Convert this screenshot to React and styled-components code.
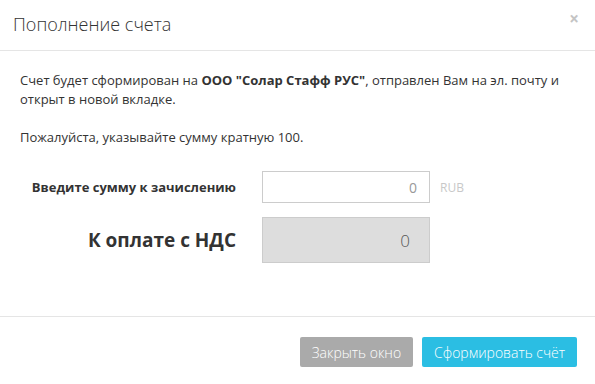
import React, { useState } from 'react';
import styled, { createGlobalStyle } from 'styled-components';

const GlobalStyle = createGlobalStyle`
    html, body {
        margin: 0;
        padding: 0;
        background: #fff;
    }
    body {
        font-family: "Open Sans", "Liberation Sans", sans-serif;
        color: #333;
    }
`;

const App = () => {
    const [amount, setAmount] = useState('');
    const total = Number(amount) || 0;

    return (
        <Modal>
            <GlobalStyle />
            <Header>
                <Title>Пополнение счета</Title>
                <CloseBtn type='button'>×</CloseBtn>
            </Header>
            <Body>
                <Text>
                    Счет будет сформирован на <b>ООО "Солар Стафф РУС"</b>, отправлен Вам на эл. почту и открыт в новой вкладке.
                </Text>
                <Text>Пожалуйста, указывайте сумму кратную 100.</Text>
                <Form>
                    <Label>Введите сумму к зачислению</Label>
                    <Field>
                        <AmountInput
                            type='text'
                            placeholder='0'
                            value={amount}
                            onChange={(e) => setAmount(e.target.value)}
                        />
                        <Currency>RUB</Currency>
                    </Field>
                    <Label $big>К оплате с НДС</Label>
                    <Field>
                        <TotalBox>{total}</TotalBox>
                    </Field>
                </Form>
            </Body>
            <Footer>
                <Button $variant='gray'>Закрыть окно</Button>
                <Button $variant='blue'>Сформировать счёт</Button>
            </Footer>
        </Modal>
    );
};

const Modal = styled.div`
    width: 595px;
    height: 384px;
    background: #fff;
    display: flex;
    flex-direction: column;
    box-sizing: border-box;
`;

const Header = styled.div`
    height: 50px;
    display: flex;
    align-items: center;
    justify-content: space-between;
    padding: 0 16px 0 13px;
    border-bottom: 1px solid #e5e5e5;
`;

const Title = styled.h4`
    margin: 0;
    font-size: 18px;
    font-weight: 300;
    color: #333;
    padding-bottom: 2px;
`;

const CloseBtn = styled.button`
    border: none;
    background: none;
    padding: 0;
    margin-bottom: 14px;
    font-family: "Open Sans", "Liberation Sans", sans-serif;
    font-size: 17px;
    font-weight: 700;
    line-height: 1;
    color: #c4c4c4;
    cursor: pointer;
`;

const Body = styled.div`
    flex: 1;
    padding: 20px 20px 0;
`;

const Text = styled.p`
    margin: 0 0 19px;
    font-size: 13px;
    line-height: 19px;
    color: #333;
    b {
        font-weight: 700;
    }
`;

const Form = styled.div`
    display: grid;
    grid-template-columns: 216px auto;
    column-gap: 26px;
    row-gap: 14px;
    align-items: center;
    margin-top: 24px;
`;

const Label = styled.div`
    text-align: right;
    font-size: ${(p) => (p.$big ? '19px' : '13px')};
    font-weight: 700;
    color: #333;
`;

const Field = styled.div`
    display: flex;
    align-items: center;
    gap: 10px;
`;

const AmountInput = styled.input`
    width: 168px;
    height: 32px;
    box-sizing: border-box;
    border: 1px solid #ccc;
    padding: 0 12px;
    text-align: right;
    font-family: "Open Sans", "Liberation Sans", sans-serif;
    font-size: 14px;
    color: #555;
    &::placeholder {
        color: #999;
    }
    &:focus {
        outline: none;
    }
`;

const Currency = styled.span`
    font-size: 12px;
    color: #c8c8c8;
`;

const TotalBox = styled.div`
    width: 168px;
    height: 46px;
    box-sizing: border-box;
    border: 1px solid #ccc;
    background: #ddd;
    display: flex;
    align-items: center;
    justify-content: flex-end;
    padding: 0 19px;
    font-size: 17px;
    font-weight: 300;
    color: #555;
`;

const Footer = styled.div`
    display: flex;
    justify-content: flex-end;
    gap: 9px;
    padding: 20px 18px 17px;
    border-top: 1px solid #e5e5e5;
`;

const Button = styled.button`
    height: 30px;
    padding: 0 12px;
    border: none;
    border-radius: 2px;
    font-family: "Open Sans", "Liberation Sans", sans-serif;
    font-size: 14px;
    font-weight: 300;
    color: #fff;
    background: ${(p) => (p.$variant === 'blue' ? '#2bbee3' : '#aaa')};
    cursor: pointer;
`;

export default App;
